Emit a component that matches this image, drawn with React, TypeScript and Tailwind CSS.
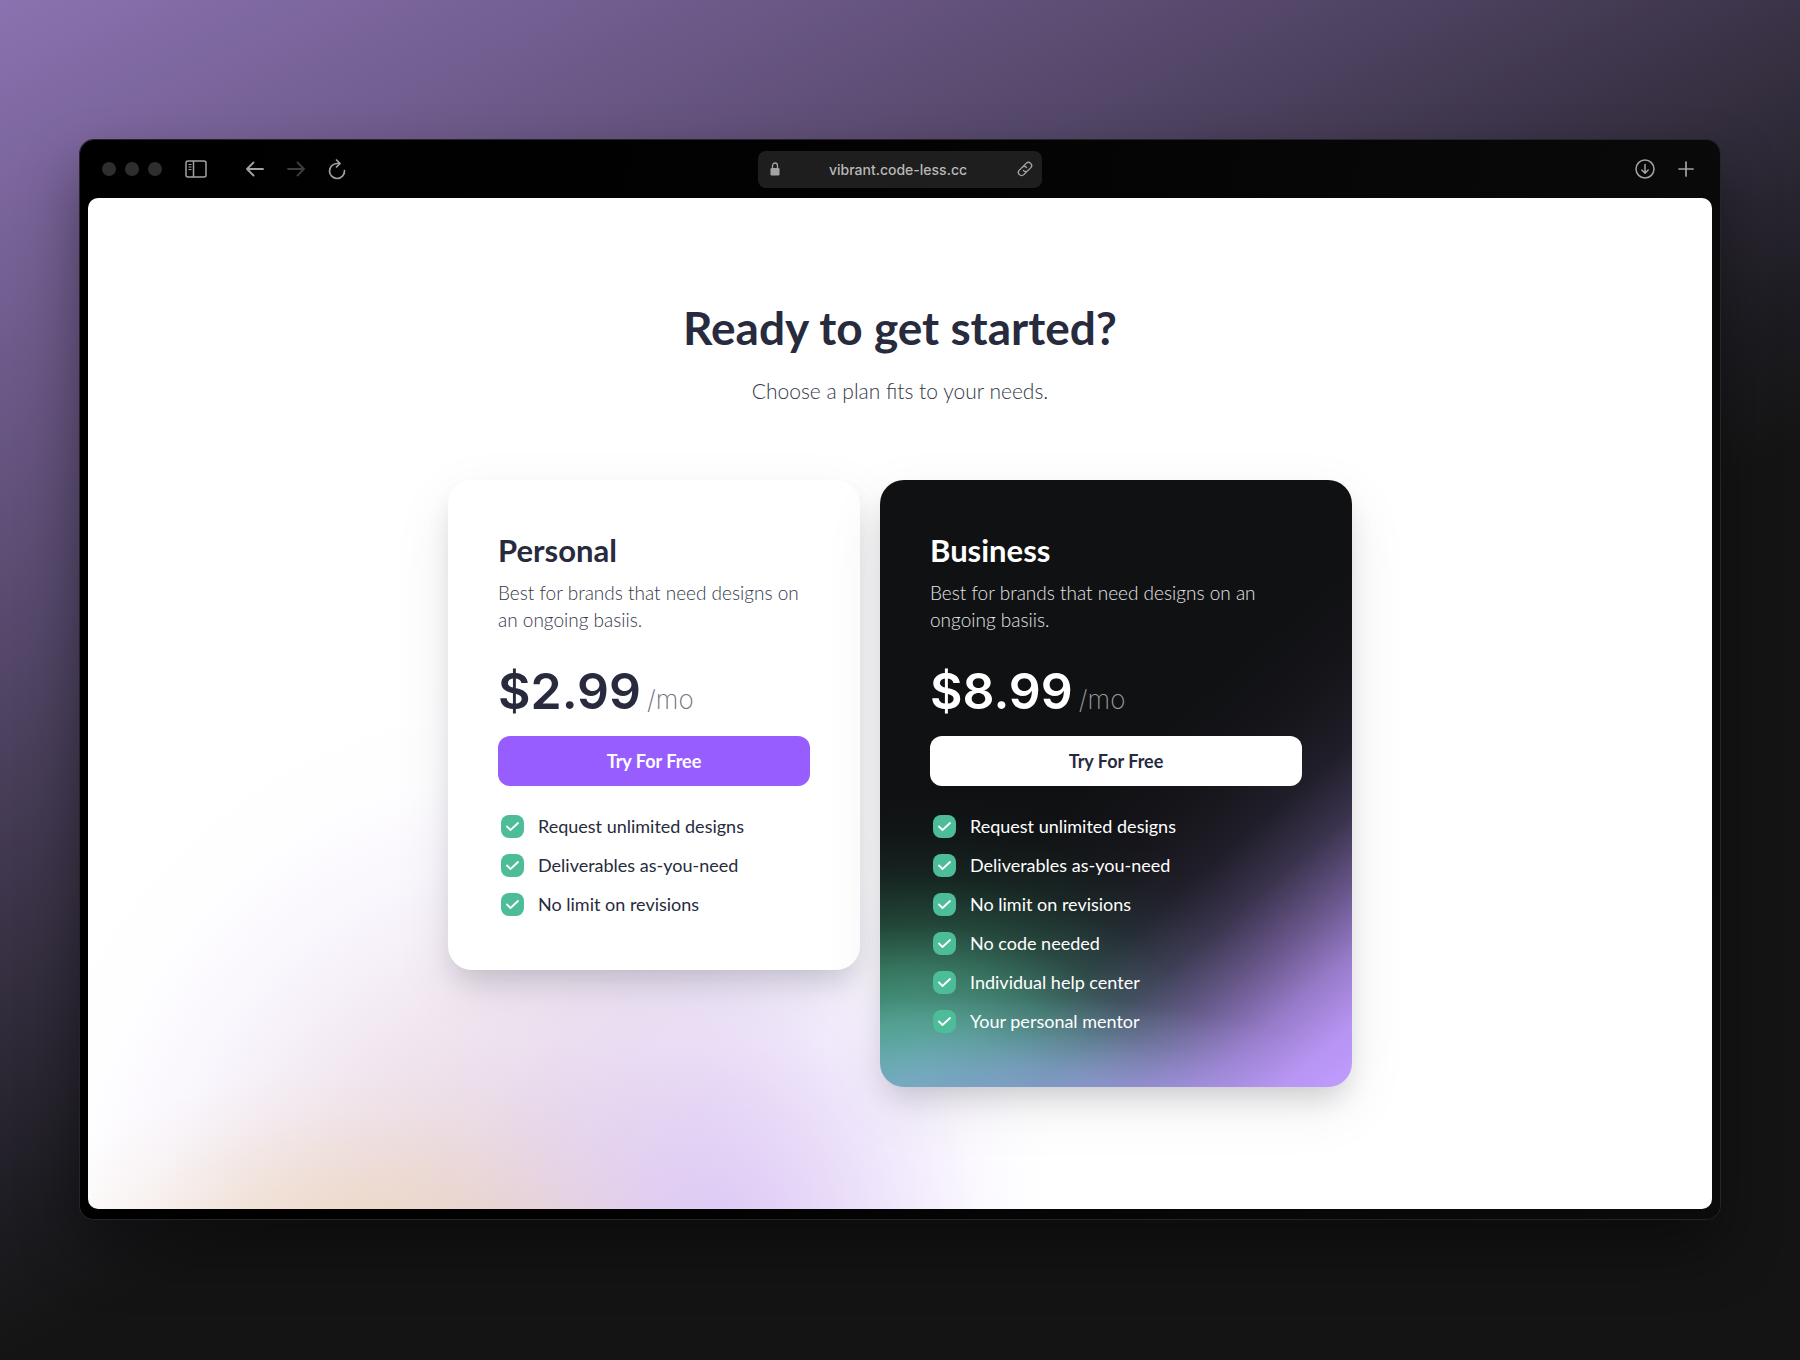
import React from "react";

type Plan = {
  name: string;
  description: string;
  price: string;
  features: string[];
  dark?: boolean;
};

const plans: Plan[] = [
  {
    name: "Personal",
    description: "Best for brands that need designs on an ongoing basiis.",
    price: "$2.99",
    features: ["Request unlimited designs", "Deliverables as-you-need", "No limit on revisions"],
  },
  {
    name: "Business",
    description: "Best for brands that need designs on an ongoing basiis.",
    price: "$8.99",
    features: [
      "Request unlimited designs",
      "Deliverables as-you-need",
      "No limit on revisions",
      "No code needed",
      "Individual help center",
      "Your personal mentor",
    ],
    dark: true,
  },
];

function SidebarIcon() {
  return (
    <svg width="22" height="18" viewBox="0 0 22 18" fill="none" stroke="currentColor" aria-hidden="true">
      <rect x="1" y="1" width="20" height="16" rx="2" strokeWidth="1.5" />
      <path d="M8.5 1v16" strokeWidth="1.5" />
      <path d="M3.5 4.5h3M3.5 7h3M3.5 9.5h3" strokeWidth="1.2" />
    </svg>
  );
}

function ArrowIcon({ forward }: { forward?: boolean }) {
  return (
    <svg width="18" height="16" viewBox="0 0 18 16" fill="none" stroke="currentColor" strokeWidth="1.8" strokeLinecap="round" strokeLinejoin="round" aria-hidden="true">
      {forward ? <path d="M1 8h16M10.5 1.5l6.5 6.5-6.5 6.5" /> : <path d="M17 8H1M7.5 1.5L1 8l6.5 6.5" />}
    </svg>
  );
}

function ReloadIcon() {
  return (
    <svg width="18" height="21" viewBox="0 0 18 21" fill="none" stroke="currentColor" strokeWidth="1.7" strokeLinecap="round" strokeLinejoin="round" aria-hidden="true">
      <path d="M16.5 11.5A7.5 7.5 0 1 1 9 4.500h2.500" />
      <path d="M8.500 1l3.500 3.500L8.500 8" />
    </svg>
  );
}

function LockIcon() {
  return (
    <svg width="10" height="14" viewBox="0 0 10 14" aria-hidden="true">
      <rect x="0.500" y="6" width="9" height="7.500" rx="1.300" fill="currentColor" />
      <path d="M2.500 6.500V3.800a2.500 2.800 0 0 1 5 0v2.700" fill="none" stroke="currentColor" strokeWidth="1.300" />
    </svg>
  );
}

function LinkIcon() {
  return (
    <svg width="18" height="18" viewBox="0 0 18 18" fill="none" stroke="currentColor" strokeWidth="1.300" strokeLinecap="round" aria-hidden="true">
      <g transform="rotate(-45 9 9)">
        <path d="M7.500 12.200H4.200a3.200 3.200 0 0 1 0-6.400H8a3.200 3.200 0 0 1 3.200 3.200" />
        <path d="M10.500 5.800h3.300a3.200 3.200 0 0 1 0 6.400H10A3.200 3.200 0 0 1 6.800 9" />
      </g>
    </svg>
  );
}

function DownloadIcon() {
  return (
    <svg width="20" height="20" viewBox="0 0 20 20" fill="none" stroke="currentColor" strokeWidth="1.500" strokeLinecap="round" strokeLinejoin="round" aria-hidden="true">
      <circle cx="10" cy="10" r="9" />
      <path d="M10 5.500v8.500M6.800 11l3.200 3.200 3.200-3.200" />
    </svg>
  );
}

function PlusIcon() {
  return (
    <svg width="16" height="16" viewBox="0 0 16 16" fill="none" stroke="currentColor" strokeWidth="1.700" strokeLinecap="round" aria-hidden="true">
      <path d="M8 1v14M1 8h14" />
    </svg>
  );
}

function CheckIcon() {
  return (
    <svg width="13" height="9" viewBox="0 0 13 9" fill="none" stroke="white" strokeWidth="1.800" strokeLinecap="round" strokeLinejoin="round" aria-hidden="true">
      <path d="M1 4.500L4.500 8L12 1" />
    </svg>
  );
}

function Toolbar() {
  return (
    <header className="grid h-[58px] grid-cols-[1fr_284px_1fr] items-center px-[14px] text-[#a3a3a3]">
      <div className="flex items-center">
        <div className="flex gap-[9px]">
          <span className="size-[14px] rounded-full bg-[#2e2e2e]" />
          <span className="size-[14px] rounded-full bg-[#2e2e2e]" />
          <span className="size-[14px] rounded-full bg-[#2e2e2e]" />
        </div>
        <button type="button" aria-label="Toggle sidebar" className="ml-[23px]">
          <SidebarIcon />
        </button>
        <button type="button" aria-label="Back" className="ml-[39px]">
          <ArrowIcon />
        </button>
        <button type="button" aria-label="Forward" className="ml-[23px] text-[#3d3d3d]">
          <ArrowIcon forward />
        </button>
        <button type="button" aria-label="Reload" className="ml-[23px]">
          <ReloadIcon />
        </button>
      </div>
      <div className="flex h-[37px] items-center justify-between rounded-lg bg-[#1e1e1e] pr-2 pl-3">
        <LockIcon />
        <input
          aria-label="Address"
          defaultValue="vibrant.code-less.cc"
          className="w-0 flex-1 bg-transparent text-center font-['Inter',sans-serif] text-[14px] font-medium text-[#b8b8b8] outline-none"
        />
        <button type="button" aria-label="Copy link">
          <LinkIcon />
        </button>
      </div>
      <div className="flex items-center justify-end gap-[23px] pr-1">
        <button type="button" aria-label="Downloads">
          <DownloadIcon />
        </button>
        <button type="button" aria-label="New tab">
          <PlusIcon />
        </button>
      </div>
    </header>
  );
}

function PlanCard({ plan }: { plan: Plan }) {
  const dark = plan.dark;
  return (
    <article
      className={
        dark
          ? "w-[472px] rounded-3xl bg-[#101113] bg-[linear-gradient(319deg,rgba(192,156,255,1)_0%,rgba(190,154,252,0.96)_6%,rgba(180,146,240,0.82)_13%,rgba(165,134,220,0.58)_20%,rgba(140,116,190,0.34)_27%,rgba(110,92,150,0.17)_34%,rgba(90,76,120,0.07)_42%,transparent_52%),radial-gradient(ellipse_85%_20%_at_25%_105%,rgba(138,178,222,0.95)_0%,rgba(126,180,208,0.75)_40%,rgba(110,180,185,0.3)_72%,transparent_100%),radial-gradient(ellipse_88%_48%_at_8%_100%,rgba(92,182,165,1)_0%,rgba(80,168,145,0.95)_22%,rgba(64,146,116,0.8)_40%,rgba(50,118,90,0.52)_56%,rgba(38,90,70,0.26)_73%,rgba(30,70,56,0.08)_88%,transparent_100%)] px-[50px] pt-[50px] pb-[46px] text-white shadow-[0_16px_28px_-8px_rgba(20,20,40,0.18),0_20px_60px_rgba(20,20,40,0.08)]"
          : "w-[412px] rounded-3xl bg-white px-[50px] pt-[50px] pb-[46px] text-[#272b3d] shadow-[0_16px_28px_-8px_rgba(20,20,40,0.18),0_20px_60px_rgba(20,20,40,0.08)]"
      }
    >
      <h2 className="text-[31px] leading-[40px] font-bold">{plan.name}</h2>
      <p className={dark ? "mt-[9px] text-[19px] leading-[27px] font-light text-[#e4e4e6]" : "mt-[9px] text-[19px] leading-[27px] font-light text-[#33384a]"}>
        {plan.description}
      </p>
      <p className="mt-[28px] flex items-baseline gap-[6px] font-['Inter',sans-serif]">
        <span className="text-[50px] leading-[60px] font-semibold">{plan.price}</span>
        <span className={dark ? "text-[26px] font-extralight text-[#9a9a9e]" : "text-[26px] font-extralight text-[#6d7080]"}>/mo</span>
      </p>
      <button
        type="button"
        className={
          dark
            ? "mt-[15px] h-[50px] w-full rounded-xl bg-white text-[18px] font-bold text-[#272b3d]"
            : "mt-[15px] h-[50px] w-full rounded-xl bg-[#975dff] text-[18px] font-bold text-white"
        }
      >
        Try For Free
      </button>
      <ul className="mt-[21px]">
        {plan.features.map((feature) => (
          <li key={feature} className="flex h-[39px] items-center gap-[14px] pl-[3px] text-[18px]">
            <span className="flex size-[23px] items-center justify-center rounded-lg bg-[#4dbc98]">
              <CheckIcon />
            </span>
            {feature}
          </li>
        ))}
      </ul>
    </article>
  );
}

export default function App() {
  return (
    <div className="min-h-screen bg-[#141414] bg-[linear-gradient(153deg,#8a72b0_0%,#6a5785_18%,#544769_29%,#352f40_43%,#1c1b20_54%,#141414_60%)] px-[80px] py-[140px] font-['Lato',sans-serif]">
      <div className="rounded-[14px] bg-[linear-gradient(100deg,#000_0%,#020202_40%,#0b0b0b_100%)] px-2 pb-[10px] shadow-[0_0_0_1px_#26232b,0_30px_60px_rgba(0,0,0,0.4)]">
        <Toolbar />
        <main className="rounded-[10px] bg-white bg-[radial-gradient(ellipse_20%_20%_at_16%_106%,rgba(238,214,175,0.7)_0%,rgba(238,214,180,0.42)_45%,rgba(240,220,190,0.13)_78%,transparent_100%),radial-gradient(ellipse_20%_42%_at_39%_104%,rgba(214,190,250,0.7)_0%,rgba(222,204,250,0.4)_50%,rgba(230,216,252,0.12)_80%,transparent_100%),radial-gradient(ellipse_33%_58%_at_27%_106%,rgba(222,196,206,0.85)_0%,rgba(228,208,226,0.6)_40%,rgba(238,228,248,0.35)_68%,rgba(248,244,254,0.15)_86%,transparent_100%)] px-8 pt-[98px] pb-[122px]">
          <div className="text-center">
            <h1 className="text-[46px] leading-[64px] font-bold text-[#272b3d]">Ready to get started?</h1>
            <p className="mt-4 text-[21px] leading-[30px] font-light text-[#33384a]">Choose a plan fits to your needs.</p>
          </div>
          <div className="mt-[74px] flex flex-wrap items-start justify-center gap-5">
            {plans.map((plan) => (
              <PlanCard key={plan.name} plan={plan} />
            ))}
          </div>
        </main>
      </div>
    </div>
  );
}
